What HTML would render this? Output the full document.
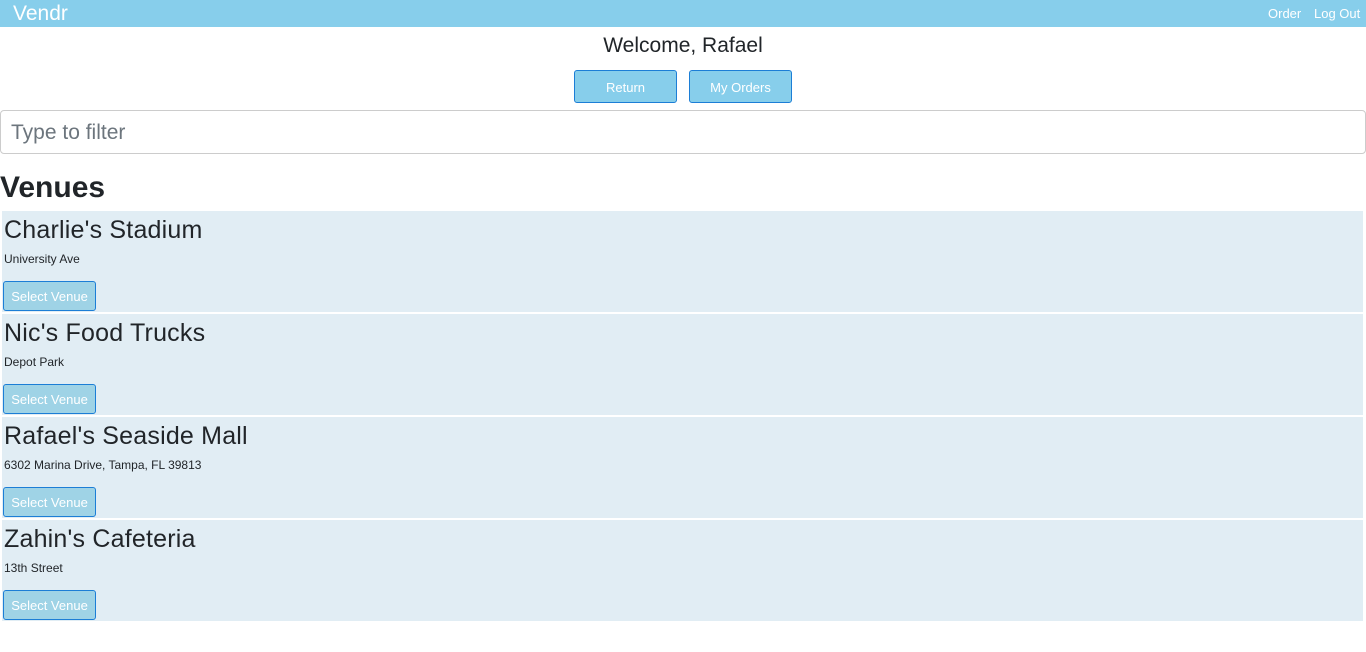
<!DOCTYPE html>
<html><head><style>
*{box-sizing:border-box;margin:0;padding:0}
body{width:1366px;height:652px;background:#fff;font-family:"Liberation Sans",sans-serif;color:#212529;position:relative;overflow:hidden}
.a{position:absolute;white-space:nowrap}
.nav{left:0;top:0;width:1366px;height:27px;background:#87ceeb}
.btn{position:absolute;background:#87ceeb;border:1px solid #1c7ed6;border-radius:3px;color:#fff;font-size:13px;text-align:center}
.card{position:absolute;left:2px;width:1361px;height:101px;background:#e1edf4}
.card h2{position:absolute;left:2px;top:4px;font-size:25px;font-weight:normal;line-height:30px;letter-spacing:0.2px}
.card p{position:absolute;left:2px;top:41px;font-size:12px}
.card .btn{left:1px;top:70px;width:93px;height:30px;line-height:29px;background:#9fd3e6}
</style></head><body>
<div class="a nav"></div>
<div class="a" style="left:13px;top:1px;font-size:21px;color:#fff;line-height:25px">Vendr</div>
<div class="a" style="left:1268px;top:6px;font-size:13px;color:#fff">Order</div>
<div class="a" style="left:1314px;top:6px;font-size:13px;color:#fff">Log Out</div>
<div class="a" style="left:0;width:1366px;text-align:center;top:32px;font-size:21px;line-height:28px">Welcome, Rafael</div>
<div class="btn" style="left:574px;top:70px;width:103px;height:33px;line-height:33px">Return</div>
<div class="btn" style="left:689px;top:70px;width:103px;height:33px;line-height:33px">My Orders</div>
<div class="a" style="left:0;top:110px;width:1366px;height:44px;border:1px solid #ccc;border-radius:4px"></div>
<div class="a" style="left:11px;top:121px;font-size:21px;color:#6c757d">Type to filter</div>
<div class="a" style="left:0;top:169px;font-size:30px;font-weight:bold;line-height:38px">Venues</div>
<div class="card" style="top:211px"><h2>Charlie's Stadium</h2><p>University Ave</p><div class="btn">Select Venue</div></div>
<div class="card" style="top:314px"><h2>Nic's Food Trucks</h2><p>Depot Park</p><div class="btn">Select Venue</div></div>
<div class="card" style="top:417px"><h2>Rafael's Seaside Mall</h2><p>6302 Marina Drive, Tampa, FL 39813</p><div class="btn">Select Venue</div></div>
<div class="card" style="top:520px"><h2>Zahin's Cafeteria</h2><p>13th Street</p><div class="btn">Select Venue</div></div>
</body></html>
